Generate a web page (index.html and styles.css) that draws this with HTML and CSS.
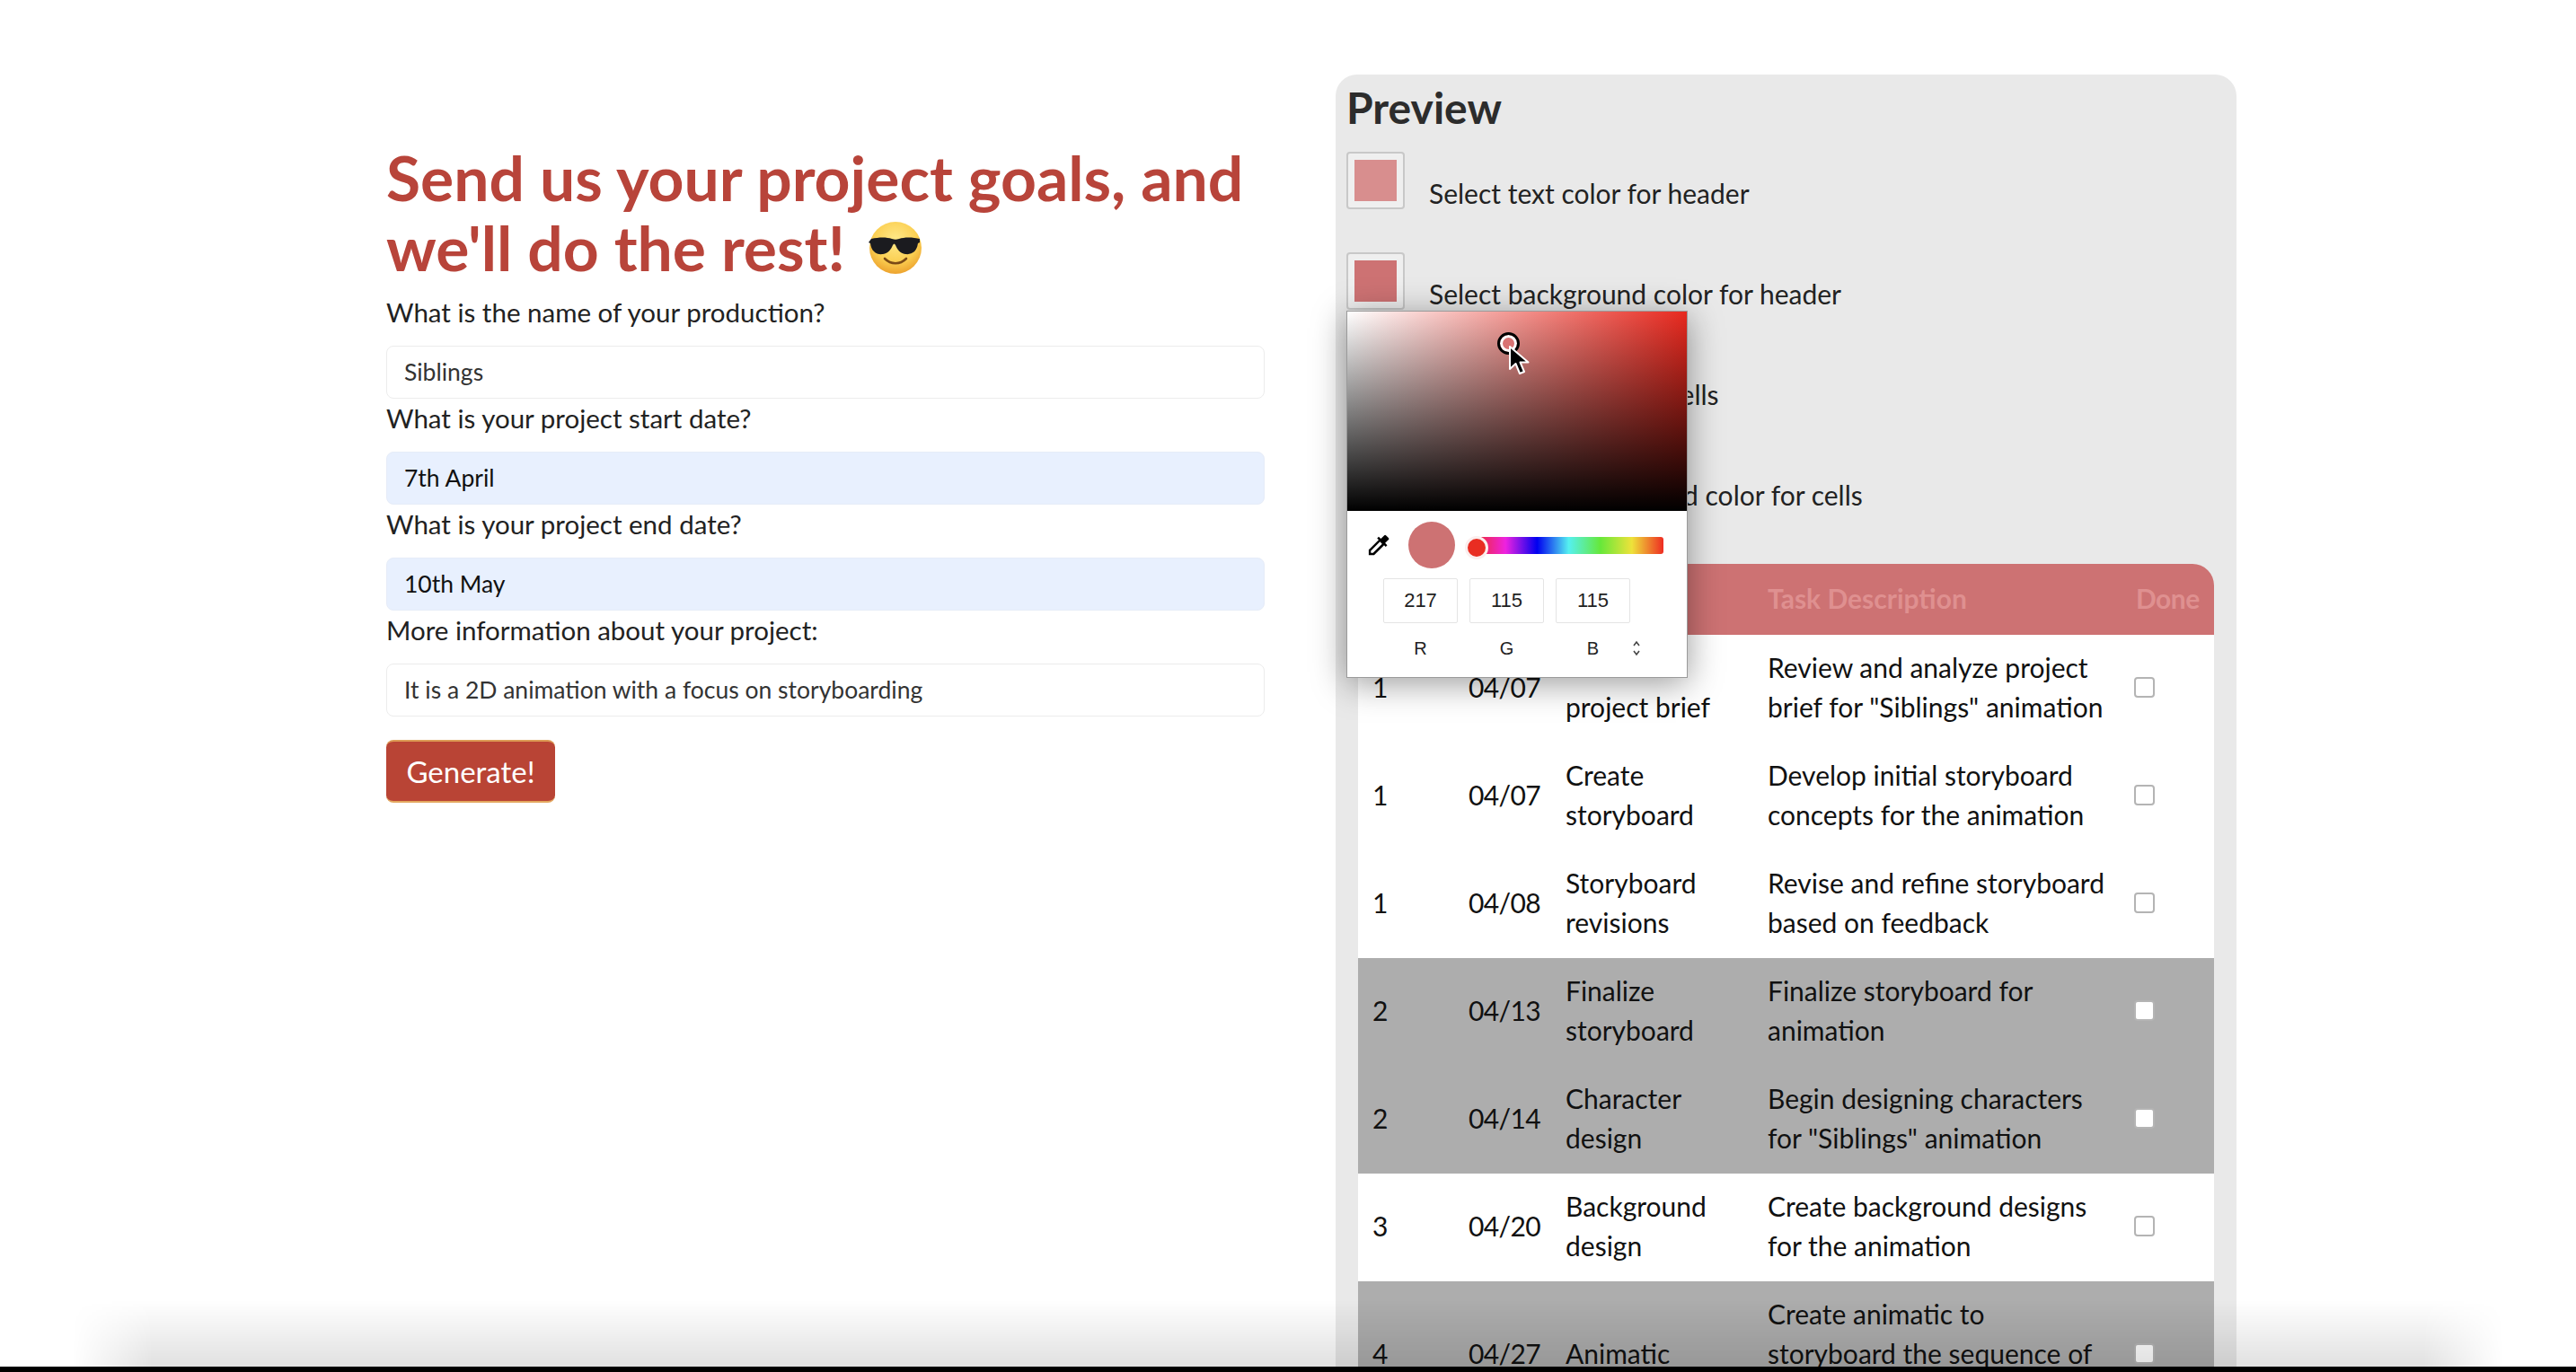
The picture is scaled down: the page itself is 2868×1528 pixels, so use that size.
FILE: index.html
```html
<!DOCTYPE html>
<html lang="en">
<head>
  <meta charset="UTF-8">
  <meta name="viewport" content="width=device-width, initial-scale=1.0">
  <title>Project Planner</title>
  <link rel="stylesheet" href="styles.css">
</head>
<body>
  <main class="page">
    <section class="goals">
      <h1 class="goals-title">Send us your project goals, and we'll do the rest!
        <svg class="emoji" viewBox="0 0 60 60" aria-label="smiling face with sunglasses">
          <defs>
            <radialGradient id="face" cx="50%" cy="35%" r="65%">
              <stop offset="0" stop-color="#ffe98a"/>
              <stop offset="0.65" stop-color="#fbcf52"/>
              <stop offset="1" stop-color="#eda32e"/>
            </radialGradient>
          </defs>
          <circle cx="30" cy="30" r="29" fill="url(#face)"/>
          <path d="M3 20c9-2 17-2 23 0 3 1 5 1 8 0 6-2 14-2 23 0v4l-2 1c-1 9-7 13-14 12-6-1-9-5-11-10-1-2-2-2-3 0-2 5-5 9-11 10-7 1-13-3-14-12l-2-1z" fill="#1b1b1f"/>
          <path d="M18 42c7 7 17 7 24 0" fill="none" stroke="#7a4a16" stroke-width="2.6" stroke-linecap="round"/>
        </svg>
      </h1>
      <form class="goals-form">
        <label class="field-label" for="name">What is the name of your production?</label>
        <input class="field" id="name" type="text" value="Siblings">
        <label class="field-label" for="start">What is your project start date?</label>
        <input class="field field-filled" id="start" type="text" value="7th April">
        <label class="field-label" for="end">What is your project end date?</label>
        <input class="field field-filled" id="end" type="text" value="10th May">
        <label class="field-label" for="info">More information about your project:</label>
        <input class="field" id="info" type="text" value="It is a 2D animation with a focus on storyboarding">
        <button class="generate" type="button">Generate!</button>
      </form>
    </section>

    <section class="preview">
      <h2 class="preview-title">Preview</h2>
      <div class="color-row">
        <input class="swatch" type="color" value="#d88e8e">
        <span>Select text color for header</span>
      </div>
      <div class="color-row">
        <input class="swatch" type="color" value="#cd7273">
        <span>Select background color for header</span>
      </div>
      <div class="color-row">
        <input class="swatch" type="color" value="#000000">
        <span>Select text color for cells</span>
      </div>
      <div class="color-row">
        <input class="swatch" type="color" value="#adadad">
        <span>Select row background color for cells</span>
      </div>

      <div class="picker">
        <div class="picker-field">
          <span class="picker-marker"></span>
          <svg class="cursor" viewBox="0 0 24 34">
            <path d="M2 2v25l6.500-6 4.500 11 5-2-4.500-10.500h9z" fill="#000" stroke="#fff" stroke-width="2" stroke-linejoin="round"/>
          </svg>
        </div>
        <div class="picker-controls">
          <svg class="dropper" viewBox="0 0 24 24">
            <path d="M20.700 5.600l-2.300-2.300a1 1 0 0 0-1.400 0l-3.100 3.100-1.900-1.900-1.400 1.400 1.400 1.400-8.900 8.900v4.800h4.800l8.900-8.900 1.400 1.400 1.400-1.400-1.900-1.900 3.100-3.100a1 1 0 0 0 0-1.400zM6.900 19H5v-1.900l8.100-8.100 1.900 1.900z"/>
          </svg>
          <span class="picker-current"></span>
          <div class="hue"><span class="hue-thumb"></span></div>
        </div>
        <div class="picker-values">
          <div class="rgb"><span class="rgb-value">217</span><span class="rgb-name">R</span></div>
          <div class="rgb"><span class="rgb-value">115</span><span class="rgb-name">G</span></div>
          <div class="rgb"><span class="rgb-value">115</span><span class="rgb-name">B</span></div>
          <svg class="updown" viewBox="0 0 10 20">
            <path d="M2 7l3-4 3 4M2 13l3 4 3-4" fill="none" stroke="#444" stroke-width="1.600"/>
          </svg>
        </div>
      </div>

      <table class="tasks">
        <colgroup>
          <col class="col-week"><col class="col-date"><col class="col-task"><col class="col-desc"><col class="col-done">
        </colgroup>
        <thead>
          <tr><th>Week</th><th>Date</th><th>Task</th><th>Task Description</th><th>Done</th></tr>
        </thead>
        <tbody>
          <tr>
            <td>1</td><td>04/07</td><td>Review project&nbsp;brief</td>
            <td>Review and analyze project brief for "Siblings" animation</td>
            <td><input class="check" type="checkbox"></td>
          </tr>
          <tr>
            <td>1</td><td>04/07</td><td>Create storyboard</td>
            <td>Develop initial storyboard concepts for the animation</td>
            <td><input class="check" type="checkbox"></td>
          </tr>
          <tr>
            <td>1</td><td>04/08</td><td>Storyboard revisions</td>
            <td>Revise and refine storyboard based on feedback</td>
            <td><input class="check" type="checkbox"></td>
          </tr>
          <tr class="shaded">
            <td>2</td><td>04/13</td><td>Finalize storyboard</td>
            <td>Finalize storyboard for animation</td>
            <td><input class="check" type="checkbox"></td>
          </tr>
          <tr class="shaded">
            <td>2</td><td>04/14</td><td>Character design</td>
            <td>Begin designing characters for "Siblings" animation</td>
            <td><input class="check" type="checkbox"></td>
          </tr>
          <tr>
            <td>3</td><td>04/20</td><td>Background design</td>
            <td>Create background designs for the animation</td>
            <td><input class="check" type="checkbox"></td>
          </tr>
          <tr class="shaded">
            <td>4</td><td>04/27</td><td>Animatic</td>
            <td>Create animatic to storyboard the sequence of the animation</td>
            <td><input class="check" type="checkbox"></td>
          </tr>
        </tbody>
      </table>
    </section>
  </main>
  <div class="video-shadow"></div>
  <div class="video-bar"></div>
</body>
</html>
```

FILE: styles.css
```css
html, body {
  height: 100%;
}
body {
  margin: 0;
  overflow: hidden;
  background: #fff;
  color: #222;
  font-family: Lato, "Open Sans", sans-serif;
  font-size: 29.5px;
  line-height: 44px;
}
.page {
  display: flex;
  align-items: flex-start;
  gap: 79px;
  padding: 83px 0 0 430px;
}

/* left column */
.goals {
  width: 978px;
  flex-shrink: 0;
  padding-top: 75px;
}
.goals-title {
  margin: 0 0 12px;
  font-size: 69.600px;
  line-height: 78px;
  font-weight: 700;
  color: #b8443a;
}
.emoji {
  width: 60px;
  height: 60px;
  vertical-align: -4px;
  margin-left: 9px;
}
.goals-form {
  display: flex;
  flex-direction: column;
  align-items: flex-start;
}
.field-label {
  margin-bottom: 15px;
}
.field {
  box-sizing: border-box;
  width: 100%;
  height: 59px;
  padding: 0 19px 2px;
  border: 1px solid #ececec;
  border-radius: 8px;
  background: #fff;
  color: #333;
  font: 26.500px Lato, "Open Sans", sans-serif;
}
.field-filled {
  border-color: #e6ecf8;
  background: #e8f0fe;
  color: #111;
}
.generate {
  width: 188px;
  height: 70px;
  margin-top: 26px;
  border: 0;
  border-top: 2px solid #dd9a55;
  border-bottom: 2px solid #e3a860;
  border-radius: 8px;
  background: #b94435;
  color: #fff;
  font: 33px Lato, "Open Sans", sans-serif;
}

/* preview panel */
.preview {
  position: relative;
  box-sizing: border-box;
  width: 1003px;
  flex-shrink: 0;
  padding: 12px 25px 40px 12px;
  border-radius: 24px;
  background: #e9e9e9;
  font-size: 30px;
}
.preview-title {
  margin: 0 0 24px;
  font-size: 48px;
  line-height: 50px;
  font-weight: 700;
  color: #2c2c2c;
}
.color-row {
  display: flex;
  align-items: flex-end;
  gap: 27px;
  height: 64px;
  margin-bottom: 48px;
}
.color-row span {
  line-height: 32px;
  margin-bottom: 2px;
}
.swatch {
  box-sizing: border-box;
  width: 65px;
  height: 64px;
  padding: 7px;
  border: 2px solid #c8c8c8;
  border-radius: 4px;
  background: #efefef;
}
.swatch::-webkit-color-swatch-wrapper {
  padding: 0;
}
.swatch::-webkit-color-swatch {
  border: 0;
}

/* colour picker popup */
.picker {
  position: absolute;
  left: 12px;
  top: 263px;
  width: 380px;
  height: 409px;
  box-sizing: border-box;
  border: 1px solid #9a9a9a;
  background: #fff;
  box-shadow: 0 6px 36px rgba(0, 0, 0, 0.4);
  z-index: 2;
}
.picker-field {
  position: relative;
  height: 222px;
  background: linear-gradient(to top, #000, transparent), linear-gradient(to right, #fff, #e8291f);
}
.picker-marker {
  position: absolute;
  left: 167px;
  top: 23px;
  width: 19px;
  height: 19px;
  border: 3px solid #000;
  border-radius: 50%;
  background: #d97373;
  box-shadow: inset 0 0 0 3px #fff;
}
.cursor {
  position: absolute;
  left: 179px;
  top: 37px;
  width: 24px;
  height: 34px;
}
.picker-controls {
  display: flex;
  align-items: center;
  height: 72px;
  margin-top: 2px;
  padding-left: 20px;
}
.dropper {
  width: 30px;
  height: 30px;
}
.picker-current {
  width: 52px;
  height: 52px;
  margin-left: 18px;
  border-radius: 50%;
  background: #cd7273;
}
.hue {
  position: relative;
  width: 211px;
  height: 19px;
  margin-left: 21px;
  border-radius: 3px;
  background: linear-gradient(to right, #ee2c22, #ee22e0, #0000f0, #55f0f0, #66e83a, #eee23a, #ee2c22);
}
.hue-thumb {
  position: absolute;
  left: -10px;
  top: -1px;
  width: 20px;
  height: 20px;
  border-radius: 50%;
  border: 3px solid #fbeeee;
  background: #e92d22;
}
.picker-values {
  display: flex;
  align-items: flex-start;
  gap: 13px;
  padding: 1px 0 0 40px;
}
.rgb {
  display: flex;
  flex-direction: column;
  align-items: center;
  width: 83px;
}
.rgb-value {
  box-sizing: border-box;
  width: 83px;
  height: 50px;
  border: 1px solid #e4e4e4;
  border-radius: 2px;
  color: #222;
  font: 22px/48px "Liberation Sans", Arial, sans-serif;
  text-align: center;
}
.rgb-name {
  margin-top: 16px;
  color: #222;
  font: 20px/24px "Liberation Sans", Arial, sans-serif;
}
.updown {
  width: 10px;
  height: 20px;
  margin: 68px 0 0 -11px;
}

/* task table */
.tasks {
  width: 953px;
  margin: 59px 0 0 13px;
  table-layout: fixed;
  border-collapse: separate;
  border-spacing: 0;
  color: #111;
}
.col-week { width: 107px; }
.col-date { width: 108px; }
.col-task { width: 225px; }
.col-desc { width: 408px; }
.col-done { width: 105px; }
.tasks th {
  height: 76px;
  padding: 0 16px 3px;
  background: #cd7273;
  color: #df9090;
  font-weight: 700;
  text-align: left;
}
.tasks th:first-child {
  border-top-left-radius: 24px;
}
.tasks th:last-child {
  border-top-right-radius: 24px;
  padding-right: 0;
  padding-left: 18px;
  letter-spacing: -0.5px;
}
.tasks td {
  box-sizing: border-box;
  height: 120px;
  padding: 14px 16px 18px;
  background: #fff;
  vertical-align: middle;
}
.tasks td:nth-child(2) {
  letter-spacing: -0.6px;
}
.tasks .shaded td {
  background: #adadad;
}
.check {
  appearance: none;
  display: block;
  width: 23px;
  height: 23px;
  margin: 0;
  border: 2px solid #b4b4b4;
  border-radius: 4px;
  background: #fff;
}

/* video player edge at the bottom */
.video-shadow {
  position: absolute;
  left: 80px;
  right: 80px;
  bottom: 0;
  height: 80px;
  background: linear-gradient(to top, rgba(0, 0, 0, 0.13), transparent);
  -webkit-mask-image: linear-gradient(to right, transparent, #000 90px, #000 calc(100% - 90px), transparent);
  mask-image: linear-gradient(to right, transparent, #000 90px, #000 calc(100% - 90px), transparent);
}
.video-bar {
  position: absolute;
  left: 0;
  right: 0;
  bottom: 0;
  height: 6px;
  background: #000;
}
```
